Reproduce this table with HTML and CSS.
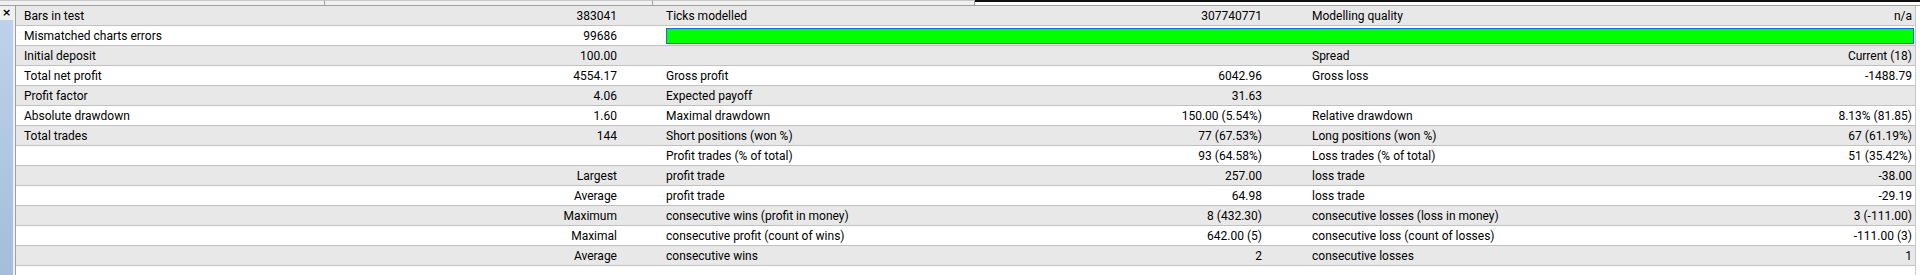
FILE: index.html
```html
<!DOCTYPE html>
<html>
<head>
<meta charset="utf-8">
<link rel="stylesheet" href="styles.css">
</head>
<body>
<div class="topstrip">
  <div class="tab tab-a"></div>
  <div class="tab tab-b"></div>
  <div class="tab tab-c"></div>
  <div class="tab tab-d"></div>
</div>
<div class="main">
  <div class="side">
    <div class="close">×</div>
    <div class="bluebar"></div>
  </div>
  <div class="report">
    <div class="row gray">
      <div class="c l">Bars in test</div><div class="c v">383041</div>
      <div class="c l">Ticks modelled</div><div class="c v">307740771</div>
      <div class="c l">Modelling quality</div><div class="c v last">n/a</div>
    </div>
    <div class="row white">
      <div class="c l">Mismatched charts errors</div><div class="c v">99686</div>
      <div class="c bar-cell"><div class="quality-bar"></div></div>
    </div>
    <div class="row gray">
      <div class="c l">Initial deposit</div><div class="c v">100.00</div>
      <div class="c l"></div><div class="c v"></div>
      <div class="c l">Spread</div><div class="c v last">Current (18)</div>
    </div>
    <div class="row white">
      <div class="c l">Total net profit</div><div class="c v">4554.17</div>
      <div class="c l">Gross profit</div><div class="c v">6042.96</div>
      <div class="c l">Gross loss</div><div class="c v last">-1488.79</div>
    </div>
    <div class="row gray">
      <div class="c l">Profit factor</div><div class="c v">4.06</div>
      <div class="c l">Expected payoff</div><div class="c v">31.63</div>
      <div class="c l"></div><div class="c v last"></div>
    </div>
    <div class="row white">
      <div class="c l">Absolute drawdown</div><div class="c v">1.60</div>
      <div class="c l">Maximal drawdown</div><div class="c v">150.00 (5.54%)</div>
      <div class="c l">Relative drawdown</div><div class="c v last">8.13% (81.85)</div>
    </div>
    <div class="row gray">
      <div class="c l">Total trades</div><div class="c v">144</div>
      <div class="c l">Short positions (won %)</div><div class="c v">77 (67.53%)</div>
      <div class="c l">Long positions (won %)</div><div class="c v last">67 (61.19%)</div>
    </div>
    <div class="row white">
      <div class="c l"></div><div class="c v"></div>
      <div class="c l">Profit trades (% of total)</div><div class="c v">93 (64.58%)</div>
      <div class="c l">Loss trades (% of total)</div><div class="c v last">51 (35.42%)</div>
    </div>
    <div class="row gray">
      <div class="c l"></div><div class="c v">Largest</div>
      <div class="c l">profit trade</div><div class="c v">257.00</div>
      <div class="c l">loss trade</div><div class="c v last">-38.00</div>
    </div>
    <div class="row white">
      <div class="c l"></div><div class="c v">Average</div>
      <div class="c l">profit trade</div><div class="c v">64.98</div>
      <div class="c l">loss trade</div><div class="c v last">-29.19</div>
    </div>
    <div class="row gray">
      <div class="c l"></div><div class="c v">Maximum</div>
      <div class="c l">consecutive wins (profit in money)</div><div class="c v">8 (432.30)</div>
      <div class="c l">consecutive losses (loss in money)</div><div class="c v last">3 (-111.00)</div>
    </div>
    <div class="row white">
      <div class="c l"></div><div class="c v">Maximal</div>
      <div class="c l">consecutive profit (count of wins)</div><div class="c v">642.00 (5)</div>
      <div class="c l">consecutive loss (count of losses)</div><div class="c v last">-111.00 (3)</div>
    </div>
    <div class="row gray">
      <div class="c l"></div><div class="c v">Average</div>
      <div class="c l">consecutive wins</div><div class="c v">2</div>
      <div class="c l">consecutive losses</div><div class="c v last">1</div>
    </div>
    <div class="row white tail"></div>
  </div>
</div>
</body>
</html>
```
FILE: styles.css
```css
html, body {
  margin: 0;
  padding: 0;
  background: #ffffff;
  width: 1920px;
  height: 275px;
  overflow: hidden;
}
body {
  font-family: Roboto, "Noto Sans", sans-serif;
  font-size: 12px;
  color: #000000;
}
.topstrip {
  height: 6px;
  display: flex;
  box-sizing: border-box;
  border-bottom: 1px solid #a0a0a0;
  background: #f0f0f0;
}
.tab {
  height: 5px;
  box-sizing: border-box;
}
.tab-a { width: 325px; border-top: 1px solid #c8c8c8; border-right: 1px solid #a0a0a0; }
.tab-b { width: 328px; border-top: 1px solid #c8c8c8; border-right: 1px solid #a0a0a0; }
.tab-c { width: 322px; border-top: 1px solid #c8c8c8; border-right: 1px solid #a0a0a0; }
.tab-d { flex: 1; border-top: 2px solid #101010; background: #ffffff; }
.main {
  display: flex;
  height: 269px;
}
.side {
  width: 15px;
  display: flex;
  flex-direction: column;
  background: #f0f0f0;
}
.close {
  height: 14px;
  width: 13px;
  font-family: "DejaVu Sans", sans-serif;
  font-size: 11px;
  font-weight: bold;
  line-height: 13px;
  text-align: center;
  color: #000;
}
.bluebar {
  width: 13px;
  flex: 1;
  background: linear-gradient(to bottom, #bdd2ea, #a5bdda);
}
.report {
  flex: 1;
  border-left: 1px solid #a0a0a0;
  display: flex;
  flex-direction: column;
  margin-right: 4px;
  border-right: 1px solid #c8c8c8;
}
.row {
  display: grid;
  grid-template-columns: 324px 302px 358px 287px 313px 1fr;
  height: 20px;
  box-sizing: border-box;
  border-bottom: 1px solid #c0c0c0;
  flex: none;
}
.gray { background: #e8e8e8; }
.white { background: #ffffff; }
.tail { border-bottom: none; flex: 1; }
.c {
  line-height: 20px;
  white-space: nowrap;
  overflow: hidden;
}
.l { padding-left: 8px; }
.v { text-align: right; padding-right: 25px; }
.v.last { padding-right: 3px; }
.row .c:nth-child(3) { padding-left: 24px; }
.row .c:nth-child(5) { padding-left: 25px; }
.bar-cell {
  grid-column: 3 / 7;
  padding: 2px 1px 1px 22px;
}
.quality-bar {
  height: 16px;
  box-sizing: border-box;
  background: #00ff00;
  border: 1px solid #1a6fd6;
}
```
